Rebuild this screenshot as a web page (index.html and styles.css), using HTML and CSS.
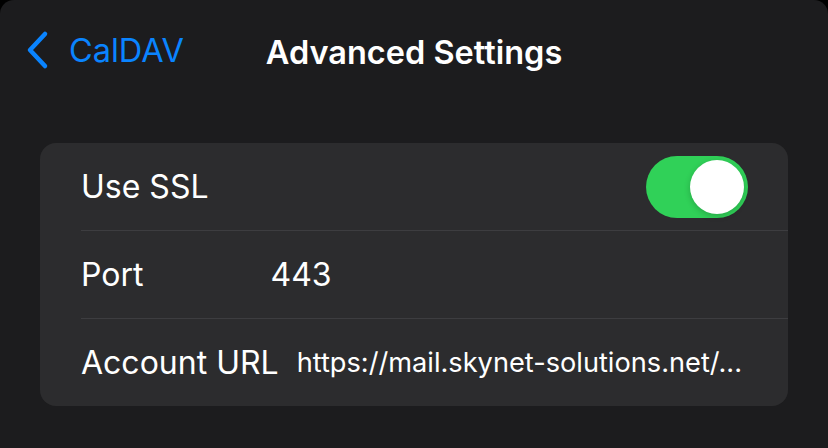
FILE: index.html
```html
<!DOCTYPE html>
<html lang="en">
<head>
  <meta charset="UTF-8">
  <title>Advanced Settings</title>
  <link rel="stylesheet" href="styles.css">
</head>
<body>

  <div class="screen">
    <div class="navbar">
      <a class="back" href="#">
        <svg class="chevron" width="24" height="40" viewBox="0 0 24 40">
          <path d="M20 4 L5 20 L20 36" fill="none" stroke="#0a84ff" stroke-width="4.5" stroke-linecap="round" stroke-linejoin="round"/>
        </svg>
        <span>CalDAV</span>
      </a>
      <h1 class="title">Advanced Settings</h1>
    </div>

    <div class="group">
      <div class="row">
        <span class="label">Use SSL</span>
        <span class="toggle on"><span class="knob"></span></span>
      </div>
      <div class="row">
        <span class="label">Port</span>
        <span class="value port">443</span>
      </div>
      <div class="row">
        <span class="label">Account URL</span>
        <span class="value url">https://mail.skynet-solutions.net/...</span>
      </div>
    </div>
  </div>

</body>
</html>
```

FILE: styles.css
```css
html, body {
  margin: 0;
  height: 100%;
  background: #000;
}

body {
  font-family: Inter, "Noto Sans", sans-serif;
  color: #fff;
}

.screen {
  height: 448px;
  background: #1c1c1e;
  border-radius: 14px 14px 0 0;
  overflow: hidden;
}

.navbar {
  position: relative;
  height: 104px;
  display: flex;
  align-items: center;
  justify-content: center;
}

.back {
  position: absolute;
  left: 25px;
  top: 30px;
  display: flex;
  align-items: center;
  gap: 20px;
  color: #0a84ff;
  text-decoration: none;
  font-size: 32.5px;
}

.title {
  margin: 0;
  font-size: 32.5px;
  font-weight: 600;
}

.group {
  margin: 39px 40px 0;
  background: #2c2c2e;
  border-radius: 16px;
  overflow: hidden;
}

.row {
  height: 87px;
  margin-left: 41px;
  padding-right: 40px;
  display: flex;
  align-items: center;
  border-bottom: 1px solid #3d3d40;
}

.row:last-child {
  border-bottom: none;
}

.label {
  font-size: 32px;
}

.value {
  font-size: 32px;
}

.port {
  margin-left: 127px;
}

.url {
  margin-left: 18px;
  font-size: 27.2px;
}

.toggle {
  margin-left: auto;
  width: 102px;
  height: 62px;
  border-radius: 31px;
  background: #30d158;
  position: relative;
}

.knob {
  position: absolute;
  top: 4px;
  right: 4px;
  width: 54px;
  height: 54px;
  border-radius: 50%;
  background: #fff;
  box-shadow: 0 2px 6px rgba(0, 0, 0, 0.2);
}
```
